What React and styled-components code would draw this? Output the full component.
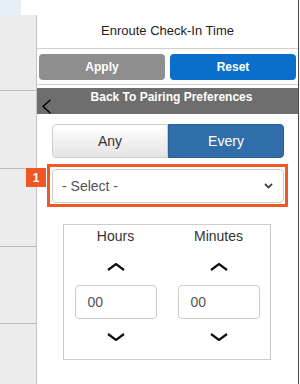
import React from 'react';
import styled, { createGlobalStyle } from 'styled-components';

const GlobalStyle = createGlobalStyle`
  html, body {
    margin: 0;
    padding: 0;
    background: #ffffff;
  }
  body {
    font-family: "Liberation Sans", Arial, sans-serif;
  }
`;

const Page = styled.div`
  display: flex;
  width: 300px;
  height: 384px;
  overflow: hidden;
  background: #ffffff;
`;

const Sidebar = styled.div`
  display: flex;
  flex-direction: column;
  width: 37px;
  flex-shrink: 0;
`;

const TopPatch = styled.div`
  width: 21px;
  height: 15px;
  background: #e6eef8;
`;

const SideBody = styled.div`
  flex: 1;
  display: flex;
  flex-direction: column;
  background: #ececec;
  border-right: 1px solid #c4c4c4;
`;

const SideRow = styled.div`
  height: ${(p) => p.h}px;
  border-bottom: 1px solid #bdbdbd;
`;

const Panel = styled.div`
  width: 261px;
  display: flex;
  flex-direction: column;
  border-right: 1px solid #4a4a4a;
`;

const Header = styled.div`
  height: 49px;
  display: flex;
  align-items: center;
  justify-content: center;
  padding-top: 12px;
  box-sizing: border-box;
  border-bottom: 1px solid #d0d0d0;
  font-size: 13px;
  color: #1e1e1e;
`;

const ButtonRow = styled.div`
  display: flex;
  gap: 5px;
  padding: 5px 2px 4px 2px;
  border-bottom: 1px solid #d0d0d0;
`;

const ActionButton = styled.div`
  width: 126px;
  height: 26px;
  border-radius: 4px;
  background: ${(p) => (p.primary ? '#0a6fca' : '#8e8e8e')};
  color: #ffffff;
  font-size: 12px;
  font-weight: bold;
  display: flex;
  align-items: center;
  justify-content: center;
`;

const BackBar = styled.div`
  margin-top: 3px;
  height: 26px;
  background: #6e6e6e;
  display: flex;
  align-items: flex-start;
  position: relative;
`;

const BackIcon = styled.svg`
  position: absolute;
  left: 4px;
  top: 11px;
`;

const BackText = styled.div`
  flex: 1;
  text-align: center;
  color: #ffffff;
  font-size: 12px;
  font-weight: bold;
  padding-top: 2px;
  padding-left: 8px;
`;

const Toggle = styled.div`
  display: flex;
  margin: 10px 14px 0 15px;
`;

const ToggleButton = styled.div`
  flex: 1;
  height: 34px;
  box-sizing: border-box;
  display: flex;
  align-items: center;
  justify-content: center;
  font-size: 14px;
  border: 1px solid ${(p) => (p.active ? '#2a5f94' : '#cccccc')};
  border-radius: ${(p) => (p.left ? '4px 0 0 4px' : '0 4px 4px 0')};
  background: ${(p) =>
    p.active ? '#2f6eaa' : 'linear-gradient(#ffffff, #e4e4e4)'};
  color: ${(p) => (p.active ? '#ffffff' : '#333333')};
`;

const SelectWrap = styled.div`
  position: relative;
  margin: 6px 10px 0 10px;
  padding: 2px 1px 1px 2px;
  border: 3px solid #ef5726;
`;

const Badge = styled.div`
  position: absolute;
  left: -24px;
  top: 1px;
  width: 20px;
  height: 19px;
  background: #ef5726;
  color: #ffffff;
  font-size: 12px;
  font-weight: bold;
  display: flex;
  align-items: center;
  justify-content: center;
`;

const SelectBox = styled.div`
  height: 34px;
  box-sizing: border-box;
  border: 1px solid #cccccc;
  border-radius: 4px;
  display: flex;
  align-items: center;
  justify-content: space-between;
  padding: 0 10px 0 9px;
  font-size: 14px;
  color: #555555;
`;

const TimeBox = styled.div`
  margin: 17px 0 0 26px;
  width: 208px;
  height: 136px;
  box-sizing: border-box;
  border: 1px solid #cccccc;
  display: grid;
  grid-template-columns: 1fr 1fr;
`;

const TimeCol = styled.div`
  display: flex;
  flex-direction: column;
  align-items: center;
`;

const TimeLabel = styled.div`
  font-size: 14px;
  color: #333333;
  margin-top: 3px;
  height: 16px;
  line-height: 16px;
`;

const Arrow = styled.svg`
  display: block;
  margin-top: ${(p) => p.mt}px;
`;

const TimeInput = styled.div`
  margin-top: 14px;
  width: 82px;
  height: 34px;
  box-sizing: border-box;
  border: 1px solid #cccccc;
  border-radius: 4px;
  display: flex;
  align-items: center;
  padding-left: 12px;
  font-size: 14px;
  color: #555555;
`;

const Chevron = ({ up, mt }) => (
  <Arrow width="18" height="8" viewBox="0 0 18 8" mt={mt}>
    <path
      d={up ? 'M1 7 L9 1 L17 7' : 'M1 1 L9 7 L17 1'}
      fill="none"
      stroke="#111111"
      strokeWidth="2.2"
    />
  </Arrow>
);

const TimeColumn = ({ label }) => (
  <TimeCol>
    <TimeLabel>{label}</TimeLabel>
    <Chevron up mt={19} />
    <TimeInput>00</TimeInput>
    <Chevron mt={14} />
  </TimeCol>
);

export default function App() {
  return (
    <>
      <GlobalStyle />
      <Page>
        <Sidebar>
          <TopPatch />
          <SideBody>
            <SideRow h={75} />
            <SideRow h={77} />
            <SideRow h={77} />
            <SideRow h={76} />
          </SideBody>
        </Sidebar>
        <Panel>
          <Header>Enroute Check-In Time</Header>
          <ButtonRow>
            <ActionButton>Apply</ActionButton>
            <ActionButton primary>Reset</ActionButton>
          </ButtonRow>
          <BackBar>
            <BackIcon width="11" height="15" viewBox="0 0 11 15">
              <path d="M9.5 0.8 L2 7.5 L9.5 14.2" fill="none" stroke="#000000" strokeWidth="1.4" />
            </BackIcon>
            <BackText>Back To Pairing Preferences</BackText>
          </BackBar>
          <Toggle>
            <ToggleButton left>Any</ToggleButton>
            <ToggleButton active>Every</ToggleButton>
          </Toggle>
          <SelectWrap>
            <Badge>1</Badge>
            <SelectBox>
              <span>- Select -</span>
              <svg width="9" height="6" viewBox="0 0 9 6">
                <path d="M1 1 L4.5 4.5 L8 1" fill="none" stroke="#444444" strokeWidth="1.8" />
              </svg>
            </SelectBox>
          </SelectWrap>
          <TimeBox>
            <TimeColumn label="Hours" />
            <TimeColumn label="Minutes" />
          </TimeBox>
        </Panel>
      </Page>
    </>
  );
}
